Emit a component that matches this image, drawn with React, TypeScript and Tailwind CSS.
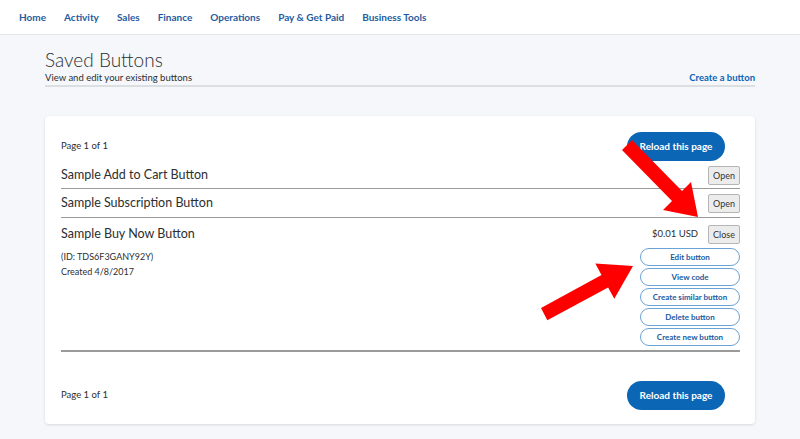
import React from "react";

const navItems = ["Home", "Activity", "Sales", "Finance", "Operations", "Pay & Get Paid", "Business Tools"];

const actions = ["Edit button", "View code", "Create similar button", "Delete button", "Create new button"];

function ReloadButton() {
  return (
    <button className="h-[29px] w-[98px] rounded-full bg-[#0b66b5] text-[10px] font-bold text-white">
      Reload this page
    </button>
  );
}

function SmallButton({ label }: { label: string }) {
  return (
    <button className="h-[19px] rounded-[2px] border border-[#b5b5b5] bg-[#ececec] px-[4px] text-[9px] text-[#333]">
      {label}
    </button>
  );
}

export default function App() {
  return (
    <div
      className="relative min-h-[439px] bg-[#f5f7fa] text-[#2c2e2f]"
      style={{ fontFamily: "Lato, 'Open Sans', sans-serif" }}
    >
      {/* Top nav */}
      <nav className="flex h-[35px] items-center gap-[18px] border-b border-[#e3e6ea] bg-white pl-[19px] text-[10px] font-bold text-[#1f5c9e]">
        {navItems.map((n) => (
          <span key={n}>{n}</span>
        ))}
      </nav>

      <div className="px-[45px]">
        {/* Header */}
        <div className="flex items-end justify-between border-b-2 border-[#dcdfe2] pb-[1px] pt-[13px]">
          <div>
            <h1 className="text-[19px] font-light leading-[23px]">Saved Buttons</h1>
            <p className="text-[9.5px] leading-[13px]">View and edit your existing buttons</p>
          </div>
          <a className="text-[9.5px] font-bold leading-[13px] text-[#0b63b5]">Create a button</a>
        </div>

        {/* Card */}
        <div className="mt-[29px] rounded-[4px] bg-white pb-[14px] pl-[16px] pr-[15px] pt-[16px] shadow-[0_1px_3px_rgba(0,0,0,0.12)]">
          <div className="flex items-center justify-between pr-[15px]">
            <span className="text-[9.5px]">Page 1 of 1</span>
            <ReloadButton />
          </div>

          <div className="flex items-center justify-between border-b-[1.5px] border-[#9a9a9a] pb-[3px] pt-[5px]">
            <span className="text-[12.5px]">Sample Add to Cart Button</span>
            <SmallButton label="Open" />
          </div>
          <div className="flex items-center justify-between border-b-[1.5px] border-[#9a9a9a] pb-[4px] pt-[5px]">
            <span className="text-[12.5px]">Sample Subscription Button</span>
            <SmallButton label="Open" />
          </div>

          <div className="border-b-2 border-[#9a9a9a] pb-[4px] pt-[7px]">
            <div className="flex items-center justify-between">
              <span className="text-[12.5px]">Sample Buy Now Button</span>
              <div className="flex items-center gap-[10px]">
                <span className="text-[9.5px]">$0.01 USD</span>
                <SmallButton label="Close" />
              </div>
            </div>
            <div className="mt-[4px] flex justify-between">
              <div className="pt-[1px] text-[9px] leading-[15px]">
                <p>(ID: TDS6F3GANY92Y)</p>
                <p>Created 4/8/2017</p>
              </div>
              <div className="flex w-[100px] flex-col gap-[2px]">
                {actions.map((a) => (
                  <button
                    key={a}
                    className="h-[18px] rounded-full border border-[#6aa3d6] bg-white text-[8px] font-bold text-[#1a5aa0]"
                  >
                    {a}
                  </button>
                ))}
              </div>
            </div>
          </div>

          <div className="mt-[29px] flex items-center justify-between pr-[15px]">
            <span className="text-[9.5px]">Page 1 of 1</span>
            <ReloadButton />
          </div>
        </div>
      </div>

      {/* Red annotation arrows */}
      <svg className="pointer-events-none absolute left-0 top-0" width="800" height="439">
        <polygon
          points="632,140 682,191 691,182 698,217 663,210 672,201 622,150"
          fill="#ff0000"
        />
        <polygon
          points="541,308 601.5,275 595.3,263.6 633,266 614.3,298.8 608.1,287.4 547.3,320.2"
          fill="#ff0000"
        />
      </svg>
    </div>
  );
}
